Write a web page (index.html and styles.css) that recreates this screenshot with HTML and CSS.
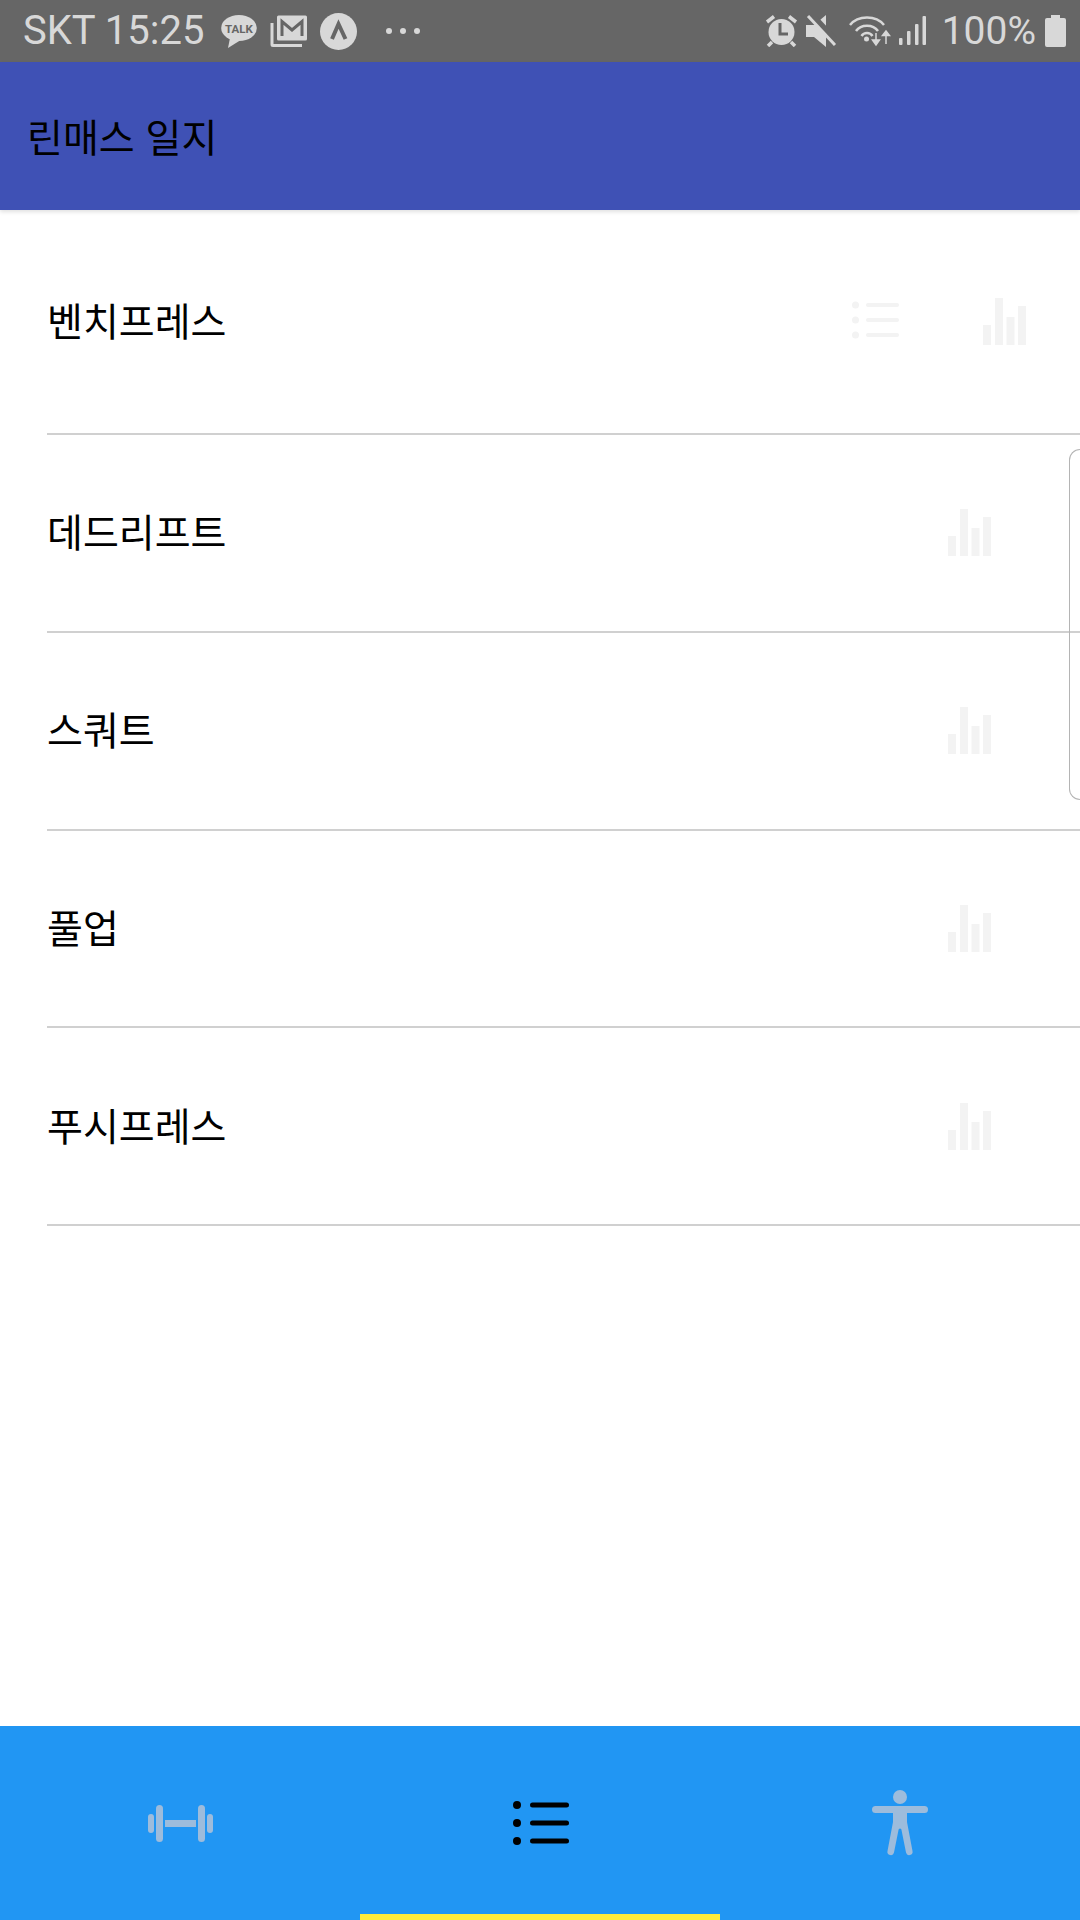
FILE: index.html
```html
<!DOCTYPE html>
<html lang="ko">
<head>
    <meta charset="UTF-8">
    <meta name="viewport" content="width=device-width, initial-scale=1.0">
    <title>린매스 일지</title>
    <link rel="stylesheet" href="styles.css">
</head>
<body>

<svg class="sprites" width="0" height="0">
    <symbol id="icon-bars" viewBox="0 0 43 47">
        <rect x="0" y="27" width="8" height="20"/>
        <rect x="12" y="0" width="8" height="47"/>
        <rect x="23.5" y="19" width="8" height="28"/>
        <rect x="35" y="8" width="8" height="39"/>
    </symbol>
    <symbol id="icon-list" viewBox="0 0 47 38">
        <circle cx="3.5" cy="4" r="3.5"/>
        <circle cx="3.5" cy="19" r="3.5"/>
        <circle cx="3.5" cy="34" r="3.5"/>
        <rect x="14" y="2" width="33" height="4" rx="2"/>
        <rect x="14" y="17" width="33" height="4" rx="2"/>
        <rect x="14" y="32" width="33" height="4" rx="2"/>
    </symbol>
</svg>

<!-- Статус-бар -->
<div class="status-bar">
    <div class="status-left">
        <span class="status-text status-time">SKT 15:25</span>
        <svg class="icon-talk" width="36" height="34" viewBox="0 0 36 34">
            <ellipse cx="18" cy="13" rx="17.8" ry="13" fill="#d8d8d8"/>
            <path d="M9 23 L7 33 L19 25.500Z" fill="#d8d8d8"/>
            <text x="18" y="17.500" text-anchor="middle" class="talk-label">TALK</text>
        </svg>
        <svg class="icon-mail" width="37" height="32" viewBox="0 0 37 32">
            <path d="M2 8 V29.500 Q2 30.500 3 30.500 H32" fill="none" stroke="#d8d8d8" stroke-width="3"/>
            <rect x="7" y="0.500" width="30" height="25" rx="1.500" fill="#d8d8d8"/>
            <path d="M12 21 V6.500 L22 15 L32 6.500 V21" fill="none" stroke="#666" stroke-width="3"/>
        </svg>
        <svg class="icon-app" width="37" height="37" viewBox="0 0 37 37">
            <circle cx="18.500" cy="18.500" r="18.500" fill="#d8d8d8"/>
            <path d="M12 26 L18.500 11 L25.500 26" fill="none" stroke="#666" stroke-width="4"/>
        </svg>
        <svg class="icon-more" width="34" height="6" viewBox="0 0 34 6" fill="#d8d8d8">
            <circle cx="3" cy="3" r="3"/>
            <circle cx="17" cy="3" r="3"/>
            <circle cx="31" cy="3" r="3"/>
        </svg>
    </div>
    <div class="status-right">
        <svg class="icon-alarm" width="33" height="32" viewBox="0 0 33 32">
            <circle cx="16.500" cy="17" r="13" fill="#d8d8d8"/>
            <path d="M2 7 L9 1.500 M31 7 L24 1.500 M7 27 L3 31 M26 27 L30 31" stroke="#d8d8d8" stroke-width="3.500"/>
            <path d="M15 8 V19 H23" fill="none" stroke="#666" stroke-width="3"/>
        </svg>
        <svg class="icon-mute" width="31" height="32" viewBox="0 0 31 32">
            <path d="M0 10 H8 L20 0 V32 L8 22 H0Z" fill="#d8d8d8"/>
            <path d="M5 -1 L32 28" stroke="#666" stroke-width="6"/>
            <path d="M2 1 L29 30" stroke="#d8d8d8" stroke-width="3"/>
        </svg>
        <svg class="icon-wifi" width="43" height="32" viewBox="0 0 43 32">
            <path d="M2 10 C10 0 28 0 36 10 M8 16 C13 9 25 9 30 16 M13.500 21 C16 17 22 17 24.500 21" fill="none" stroke="#d8d8d8" stroke-width="2.500"/>
            <circle cx="18.500" cy="24" r="2.500" fill="#d8d8d8"/>
            <path d="M28 18 V26 M24.500 25 L28 30 L31.500 25Z M38 29 V20 M34.500 20.500 L38 16 L41.500 20.500Z" fill="#d8d8d8" stroke="#d8d8d8" stroke-width="1.500"/>
        </svg>
        <svg class="icon-signal" width="30" height="30" viewBox="0 0 30 30" fill="#d8d8d8">
            <rect x="1" y="22" width="3.500" height="7" rx="1"/>
            <rect x="9" y="15" width="3.500" height="14" rx="1"/>
            <rect x="17" y="8" width="3.500" height="21" rx="1"/>
            <rect x="24.500" y="0" width="3.500" height="29" rx="1"/>
        </svg>
        <span class="status-text battery-text">100%</span>
        <svg class="icon-battery" width="21" height="32" viewBox="0 0 21 32">
            <path d="M6 0 H15 V3 H19 Q21 3 21 5 V30 Q21 32 19 32 H2 Q0 32 0 30 V5 Q0 3 2 3 H6Z" fill="#d8d8d8"/>
        </svg>
    </div>
</div>

<!-- Заголовок -->
<header class="app-header">
    <h1>린매스 일지</h1>
</header>

<!-- Список вправ -->
<main class="exercise-list">
    <div class="exercise-row exercise-row-first">
        <span class="exercise-name">벤치프레스</span>
        <div class="row-actions">
            <svg class="row-icon icon-log" width="47" height="38"><use href="#icon-list"/></svg>
            <svg class="row-icon" width="43" height="47"><use href="#icon-bars"/></svg>
        </div>
    </div>
    <div class="exercise-row">
        <span class="exercise-name">데드리프트</span>
        <div class="row-actions">
            <svg class="row-icon" width="43" height="47"><use href="#icon-bars"/></svg>
        </div>
    </div>
    <div class="exercise-row">
        <span class="exercise-name">스쿼트</span>
        <div class="row-actions">
            <svg class="row-icon" width="43" height="47"><use href="#icon-bars"/></svg>
        </div>
    </div>
    <div class="exercise-row">
        <span class="exercise-name">풀업</span>
        <div class="row-actions">
            <svg class="row-icon" width="43" height="47"><use href="#icon-bars"/></svg>
        </div>
    </div>
    <div class="exercise-row">
        <span class="exercise-name">푸시프레스</span>
        <div class="row-actions">
            <svg class="row-icon" width="43" height="47"><use href="#icon-bars"/></svg>
        </div>
    </div>
</main>

<!-- Ручка бічної панелі -->
<div class="edge-handle"></div>

<!-- Нижнє меню -->
<nav class="tab-bar">
    <div class="tab">
        <svg class="tab-icon" width="65" height="37" viewBox="0 0 65 37">
            <rect x="0" y="9" width="6" height="19" rx="3"/>
            <rect x="8" y="0" width="7" height="37" rx="3.500"/>
            <rect x="17" y="15" width="31" height="7"/>
            <rect x="50" y="0" width="7" height="37" rx="3.500"/>
            <rect x="59" y="9" width="6" height="19" rx="3"/>
        </svg>
    </div>
    <div class="tab tab-active">
        <svg class="tab-icon" width="56" height="44" viewBox="0 0 56 44">
            <circle cx="4" cy="4" r="4"/>
            <circle cx="4" cy="22" r="4"/>
            <circle cx="4" cy="40" r="4"/>
            <rect x="17" y="1.500" width="39" height="5" rx="2.500"/>
            <rect x="17" y="19.500" width="39" height="5" rx="2.500"/>
            <rect x="17" y="37.500" width="39" height="5" rx="2.500"/>
        </svg>
    </div>
    <div class="tab">
        <svg class="tab-icon" width="56" height="66" viewBox="0 0 56 66">
            <circle cx="28" cy="7" r="7"/>
            <rect x="0" y="16" width="56" height="7" rx="3.500"/>
            <path d="M21 22 H35 V32 L40.500 61 A3.300 3.300 0 0 1 34 62.500 L29.500 40 A1.500 1.500 0 0 0 26.500 40 L22 62.500 A3.300 3.300 0 0 1 15.500 61 L21 32Z"/>
        </svg>
    </div>
</nav>

</body>
</html>
```

FILE: styles.css
```css
* {
    margin: 0;
    padding: 0;
    box-sizing: border-box;
}

body {
    width: 1080px;
    height: 1920px;
    display: flex;
    flex-direction: column;
    position: relative;
    overflow: hidden;
    background: #fff;
    color: #000;
    font-family: "Noto Sans CJK KR", "Noto Sans", sans-serif;
}

.sprites {
    position: absolute;
}

/* Статус-бар */
.status-bar {
    height: 62px;
    flex-shrink: 0;
    display: flex;
    align-items: center;
    justify-content: space-between;
    padding: 0 14px 0 23px;
    background: #666;
}

.status-left,
.status-right {
    display: flex;
    align-items: center;
}

.status-text {
    font-family: Roboto, sans-serif;
    font-size: 39px;
    line-height: 62px;
    color: #d8d8d8;
}

.status-time {
    font-size: 40px;
}

.talk-label {
    font-family: Roboto, sans-serif;
    font-size: 11.5px;
    font-weight: 700;
    fill: #666;
}

.icon-talk {
    margin: 2px 0 0 17px;
}

.icon-mail,
.icon-app {
    margin-left: 13px;
}

.icon-more {
    margin-left: 29px;
}

.icon-mute {
    margin-left: 8px;
}

.icon-wifi {
    margin-left: 11px;
}

.icon-signal {
    margin-left: 7px;
}

.battery-text {
    margin-left: 14px;
}

.icon-battery {
    margin-left: 9px;
}

/* Заголовок */
.app-header {
    height: 148px;
    flex-shrink: 0;
    display: flex;
    align-items: center;
    padding: 0 0 2px 27px;
    background: #3f51b5;
    box-shadow: 0 2px 4px rgba(0, 0, 0, 0.12);
    position: relative;
}

.app-header h1 {
    font-size: 39px;
    font-weight: 400;
    color: #000;
}

/* Список */
.exercise-list {
    flex: 1;
}

.exercise-row {
    height: 197.75px;
    margin-left: 47px;
    padding-right: 89px;
    display: flex;
    align-items: center;
    justify-content: space-between;
    border-bottom: 2px solid #d0d0d0;
}

.exercise-row-first {
    height: 225px;
    padding-right: 54px;
}

.exercise-name {
    font-size: 39px;
    margin-bottom: 5px;
}

.row-actions {
    display: flex;
    align-items: center;
    gap: 84px;
}

.row-icon {
    display: block;
    fill: #f3f3f3;
}

.icon-log {
    margin-top: -3px;
}

.edge-handle {
    position: absolute;
    top: 449px;
    right: 0;
    width: 11px;
    height: 351px;
    border: 1px solid #b4b4b4;
    border-right: none;
    border-radius: 12px 0 0 12px;
}

/* Нижнє меню */
.tab-bar {
    height: 194px;
    flex-shrink: 0;
    display: grid;
    grid-template-columns: repeat(3, 1fr);
    background: #2196f3;
}

.tab {
    display: flex;
    align-items: center;
    justify-content: center;
    position: relative;
    fill: #9dbcdc;
}

.tab-active {
    fill: #000;
    padding-left: 1px;
}

.tab-active::after {
    content: "";
    position: absolute;
    left: 0;
    right: 0;
    bottom: 0;
    height: 6px;
    background: #ffeb3b;
}

.tab-icon {
    display: block;
}
```
